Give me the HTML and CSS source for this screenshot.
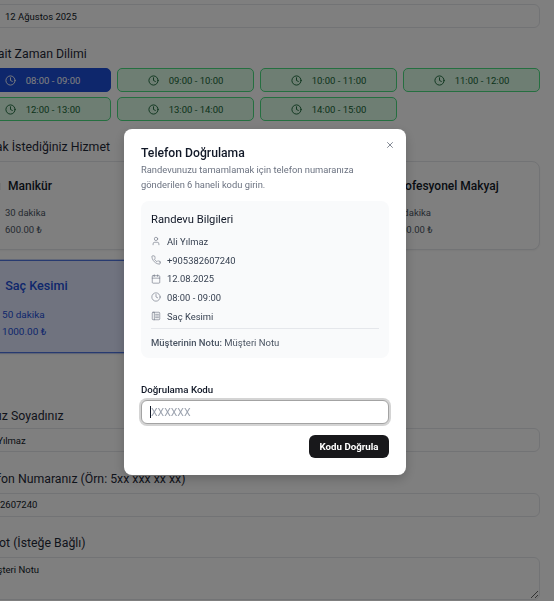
FILE: index.html
```html
<!DOCTYPE html>
<html lang="tr">
<head>
  <meta charset="UTF-8">
  <meta name="viewport" content="width=device-width, initial-scale=1.0">
  <title>Randevu</title>
  <link rel="stylesheet" href="styles.css">
</head>
<body>
  <svg class="icon-sprite" width="0" height="0">
    <symbol id="i-clock" viewBox="0 0 24 24"><circle cx="12" cy="12" r="10"/><polyline points="12 6 12 12 16 14"/></symbol>
    <symbol id="i-user" viewBox="0 0 24 24"><path d="M19 21v-2a4 4 0 0 0-4-4H9a4 4 0 0 0-4 4v2"/><circle cx="12" cy="7" r="4"/></symbol>
    <symbol id="i-phone" viewBox="0 0 24 24"><path d="M22 16.92v3a2 2 0 0 1-2.18 2 19.79 19.79 0 0 1-8.63-3.07 19.5 19.5 0 0 1-6-6 19.79 19.79 0 0 1-3.07-8.67A2 2 0 0 1 4.11 2h3a2 2 0 0 1 2 1.72 12.84 12.84 0 0 0 .7 2.81 2 2 0 0 1-.45 2.11L8.09 9.91a16 16 0 0 0 6 6l1.27-1.27a2 2 0 0 1 2.11-.45 12.84 12.84 0 0 0 2.81.7A2 2 0 0 1 22 16.92z"/></symbol>
    <symbol id="i-calendar" viewBox="0 0 24 24"><rect x="3" y="4" width="18" height="18" rx="2"/><line x1="16" y1="2" x2="16" y2="6"/><line x1="8" y1="2" x2="8" y2="6"/><line x1="3" y1="10" x2="21" y2="10"/></symbol>
    <symbol id="i-book" viewBox="0 0 24 24"><rect x="3" y="3" width="18" height="18" rx="2"/><line x1="8" y1="3" x2="8" y2="21"/><line x1="11" y1="8" x2="18" y2="8"/><line x1="11" y1="12" x2="18" y2="12"/><line x1="11" y1="16" x2="18" y2="16"/></symbol>
  </svg>

  <main class="page">
    <input class="field field-date" type="text" value="12 Ağustos 2025">

    <h2 class="section-label label-slots">Müsait Zaman Dilimi</h2>
    <div class="slots">
      <button class="slot slot-active"><svg class="icon"><use href="#i-clock"/></svg>08:00 - 09:00</button>
      <button class="slot"><svg class="icon"><use href="#i-clock"/></svg>09:00 - 10:00</button>
      <button class="slot"><svg class="icon"><use href="#i-clock"/></svg>10:00 - 11:00</button>
      <button class="slot"><svg class="icon"><use href="#i-clock"/></svg>11:00 - 12:00</button>
      <button class="slot"><svg class="icon"><use href="#i-clock"/></svg>12:00 - 13:00</button>
      <button class="slot"><svg class="icon"><use href="#i-clock"/></svg>13:00 - 14:00</button>
      <button class="slot"><svg class="icon"><use href="#i-clock"/></svg>14:00 - 15:00</button>
    </div>

    <h2 class="section-label label-services">Almak İstediğiniz Hizmet</h2>
    <div class="services">
      <div class="service">
        <h3 class="service-name"><svg class="icon service-icon"><use href="#i-book"/></svg>Manikür</h3>
        <p class="service-meta">30 dakika</p>
        <p class="service-meta">600.00 ₺</p>
      </div>
      <div class="service">
        <h3 class="service-name"><svg class="icon service-icon"><use href="#i-book"/></svg>Pedikür</h3>
        <p class="service-meta">45 dakika</p>
        <p class="service-meta">700.00 ₺</p>
      </div>
      <div class="service">
        <h3 class="service-name"><svg class="icon service-icon"><use href="#i-book"/></svg>Profesyonel Makyaj</h3>
        <p class="service-meta">60 dakika</p>
        <p class="service-meta">1500.00 ₺</p>
      </div>
      <div class="service service-active">
        <h3 class="service-name"><svg class="icon service-icon"><use href="#i-book"/></svg>Saç Kesimi</h3>
        <p class="service-meta">50 dakika</p>
        <p class="service-meta">1000.00 ₺</p>
      </div>
    </div>

    <h2 class="section-label label-name">Adınız Soyadınız</h2>
    <input class="field" type="text" value="Ali Yılmaz">

    <h2 class="section-label label-form">Telefon Numaranız (Örn: 5xx xxx xx xx)</h2>
    <input class="field" type="text" value="5382607240">

    <h2 class="section-label label-form">Ek Not (İsteğe Bağlı)</h2>
    <textarea class="field field-note">Müşteri Notu</textarea>
  </main>

  <div class="overlay">
    <section class="modal">
      <button class="modal-close" aria-label="Kapat">
        <svg viewBox="0 0 24 24"><line x1="18" y1="6" x2="6" y2="18"/><line x1="6" y1="6" x2="18" y2="18"/></svg>
      </button>
      <h2 class="modal-title">Telefon Doğrulama</h2>
      <p class="modal-desc">Randevunuzu tamamlamak için telefon numaranıza gönderilen 6 haneli kodu girin.</p>

      <div class="summary">
        <h3 class="summary-title">Randevu Bilgileri</h3>
        <ul class="summary-list">
          <li><svg class="icon"><use href="#i-user"/></svg>Ali Yılmaz</li>
          <li><svg class="icon"><use href="#i-phone"/></svg>+905382607240</li>
          <li><svg class="icon"><use href="#i-calendar"/></svg>12.08.2025</li>
          <li><svg class="icon"><use href="#i-clock"/></svg>08:00 - 09:00</li>
          <li><svg class="icon"><use href="#i-book"/></svg>Saç Kesimi</li>
        </ul>
        <p class="summary-note"><strong>Müşterinin Notu:</strong> Müşteri Notu</p>
      </div>

      <label class="code-label" for="code">Doğrulama Kodu</label>
      <div class="code-input"><span class="caret"></span><span class="code-placeholder">XXXXXX</span></div>
      <div class="modal-actions">
        <button class="verify-btn">Kodu Doğrula</button>
      </div>
    </section>
  </div>
</body>
</html>
```

FILE: styles.css
```css
* {
  box-sizing: border-box;
}
html, body {
  height: 100%;
}
body {
  margin: 0;
  overflow: hidden;
  background-color: white;
  color: #1f2937;
  font-family: Roboto, "Open Sans", sans-serif;
}
h2, h3, p, ul {
  margin: 0;
  padding: 0;
}
.icon-sprite {
  position: absolute;
}
.icon {
  width: 11px;
  height: 11px;
  flex: none;
  fill: none;
  stroke: currentColor;
  stroke-width: 2;
  stroke-linecap: round;
  stroke-linejoin: round;
}

/* page behind the dialog, scrolled a little to the right */
.page {
  width: 566px;
  margin-left: -26px;
  padding-top: 4px;
}
.field {
  display: block;
  width: 100%;
  height: 24px;
  padding: 0 9px;
  background-color: white;
  border: 1px solid #e5e7eb;
  border-radius: 6px;
  color: #111827;
  font-family: inherit;
  font-size: 9.5px;
}
.field-date {
  padding-left: 30px;
}
.field-note {
  height: 43px;
  padding-top: 6px;
}
.section-label {
  font-size: 12.3px;
  font-weight: 400;
  line-height: 18px;
}
.label-slots {
  margin-top: 17px;
  margin-bottom: 5px;
}
.label-services {
  margin-top: 17px;
  margin-bottom: 5px;
}
.label-name {
  margin-top: 56px;
  margin-bottom: 3px;
}
.label-form {
  margin-top: 17.5px;
  margin-bottom: 5px;
}

.slots {
  display: grid;
  grid-template-columns: repeat(4, 1fr);
  gap: 5px 6px;
}
.slot {
  display: flex;
  align-items: center;
  justify-content: center;
  gap: 10px;
  height: 24px;
  padding: 0;
  background-color: #dcfce7;
  border: 1px solid #4ade80;
  border-radius: 5px;
  color: #166534;
  font-family: inherit;
  font-size: 9.5px;
  font-weight: 400;
}
.slot-active {
  background-color: #1d4ed8;
  border-color: #1d4ed8;
  color: white;
}

.services {
  display: grid;
  grid-template-columns: repeat(3, 1fr);
  gap: 12px;
}
.service {
  height: 89px;
  padding: 16px 15px;
  background-color: white;
  border: 1px solid #e5e7eb;
  border-radius: 8px;
  box-shadow: 0 1px 2px rgba(0, 0, 0, 0.05);
  color: #4b5563;
}
.service-name {
  display: flex;
  align-items: center;
  gap: 7px;
  margin-bottom: 13px;
  color: #111827;
  font-size: 12px;
  font-weight: 500;
  line-height: 16px;
}
.service-icon {
  color: #6b7280;
}
.service-meta {
  margin-bottom: 5px;
  padding-left: 15px;
  font-size: 9.5px;
  line-height: 12px;
}
.service-active {
  grid-column: 1;
  background-color: #e0e7ff;
  border-color: #1d4ed8;
  color: #1d4ed8;
  transform: scale(1.05);
}
.service-active .service-name,
.service-active .service-icon {
  color: #1d4ed8;
}

/* dialog */
.overlay {
  position: fixed;
  inset: 0;
  display: flex;
  align-items: center;
  justify-content: center;
  padding-top: 3px;
  padding-right: 24px;
  background-color: rgba(0, 0, 0, 0.5);
}
.modal {
  position: relative;
  width: 282px;
  height: 346px;
  padding: 17px;
  background-color: white;
  border-radius: 8px;
  box-shadow: 0 4px 12px rgba(0, 0, 0, 0.2);
}
.modal-close {
  position: absolute;
  top: 11px;
  right: 11px;
  width: 10px;
  height: 10px;
  padding: 0;
  background: none;
  border: none;
  color: #6b7280;
}
.modal-close svg {
  display: block;
  fill: none;
  stroke: currentColor;
  stroke-width: 2;
  stroke-linecap: round;
}
.modal-title {
  color: #111827;
  font-size: 12.2px;
  font-weight: 500;
  line-height: 15px;
}
.modal-desc {
  width: 240px;
  margin-top: 1px;
  color: #6b7280;
  font-size: 9.35px;
  line-height: 15px;
}
.summary {
  height: 157px;
  margin-top: 9px;
  padding: 11px 10px 10px;
  background-color: #f9fafb;
  border-radius: 8px;
}
.summary-title {
  color: #111827;
  font-size: 11.2px;
  font-weight: 400;
  line-height: 16px;
}
.summary-list {
  margin-top: 4px;
  list-style: none;
}
.summary-list li {
  display: flex;
  align-items: center;
  gap: 6px;
  height: 18.7px;
  color: #374151;
  font-size: 9.4px;
}
.summary-list .icon {
  width: 10px;
  height: 10px;
  stroke-width: 1.5;
  color: #6b7280;
}
.summary-note {
  margin-top: 3px;
  padding-top: 7px;
  border-top: 1px solid #e5e7eb;
  color: #4b5563;
  font-size: 9.5px;
  line-height: 13px;
}
.summary-note strong {
  font-weight: 500;
}
.code-label {
  display: block;
  margin-top: 25px;
  color: #111827;
  font-size: 9.7px;
  font-weight: 500;
  line-height: 14px;
}
.code-input {
  display: flex;
  align-items: center;
  height: 24px;
  margin-top: 3px;
  padding: 0 8px;
  background-color: white;
  border: 1px solid #a3a3a3;
  border-radius: 6px;
  box-shadow: 0 0 0 2px #d4d4d4;
  font-size: 10.5px;
}
.caret {
  width: 1px;
  height: 12px;
  background-color: #111827;
}
.code-placeholder {
  color: #9ca3af;
}
.modal-actions {
  display: flex;
  justify-content: flex-end;
  margin-top: 11px;
}
.verify-btn {
  width: 80px;
  height: 23px;
  padding: 0;
  background-color: #18181b;
  border: none;
  border-radius: 6px;
  color: white;
  font-family: inherit;
  font-size: 9.7px;
  font-weight: 700;
}
```
